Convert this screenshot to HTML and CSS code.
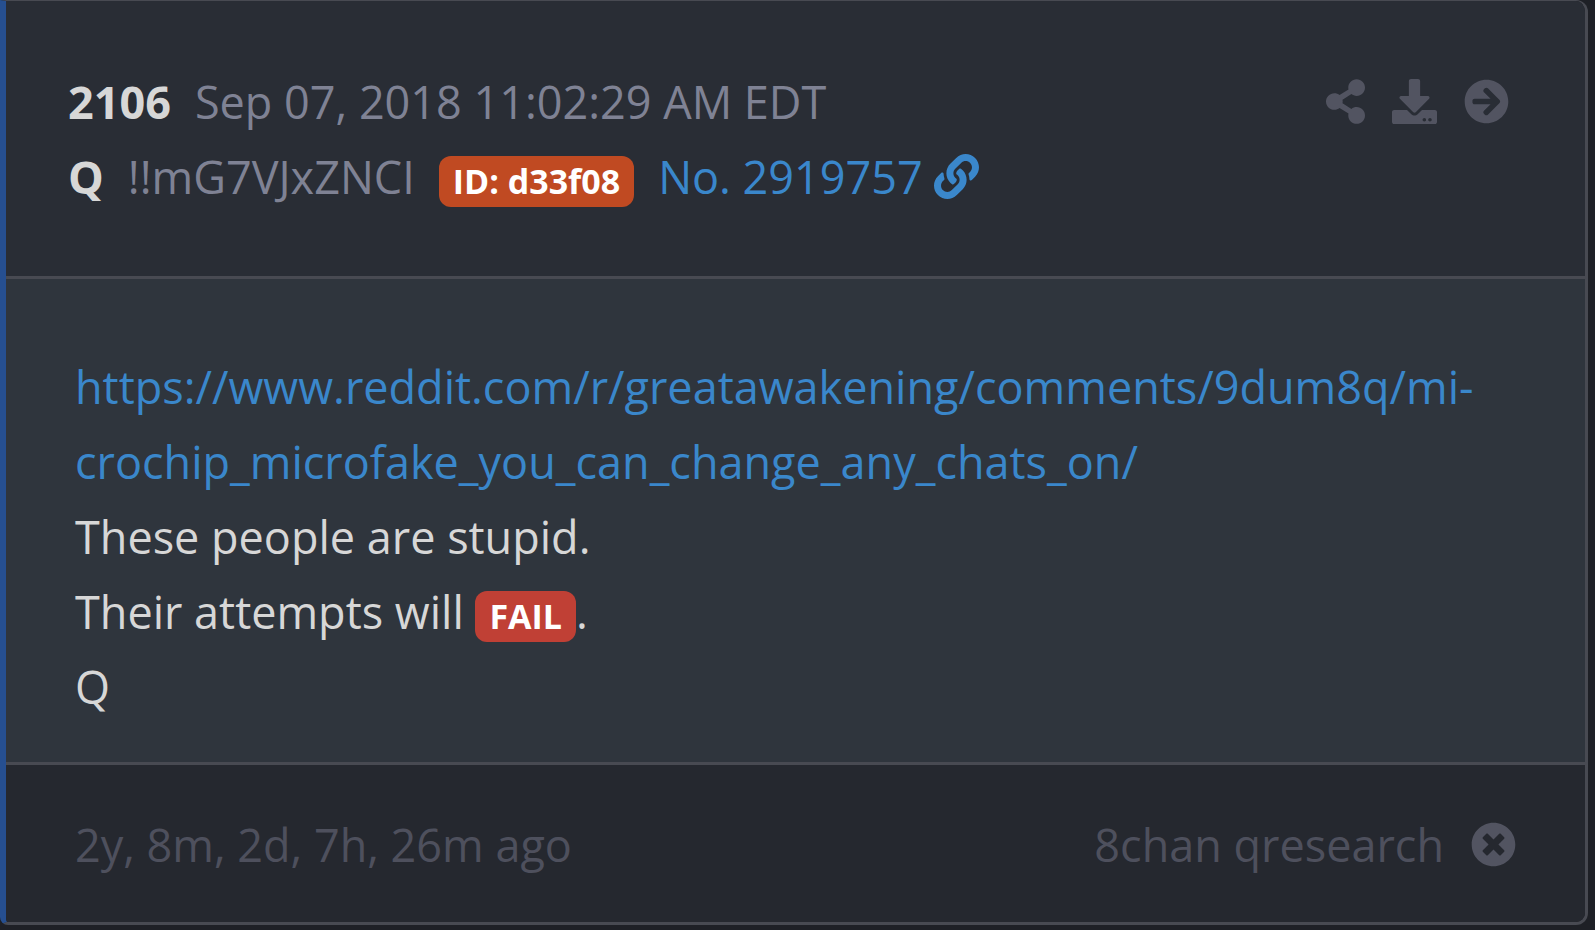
FILE: index.html
```html
<!DOCTYPE html>
<html lang="en">
  <head>
    <meta charset="UTF-8" />
    <meta name="viewport" content="width=device-width, initial-scale=1.0" />
    <title>2106</title>
    <link rel="stylesheet" href="styles.css">
  </head>
  <body>
    <article class="card">
      <header class="card-header">
        <div class="meta">
          <div class="meta-row">
            <strong class="strong">2106</strong>
            <time datetime="2018-09-07T11:02:29-04:00">Sep 07, 2018 11:02:29 AM EDT</time>
          </div>
          <div class="meta-row">
            <strong class="strong">Q</strong>
            <span>!!mG7VJxZNCI</span>
            <span class="badge badge-id">ID: d33f08</span>
            <a href="#2919757">No. 2919757 <svg class="icon" viewBox="0 0 512 512" aria-hidden="true"><path d="M326.612 185.391c59.747 59.809 58.927 155.698.36 214.59-.11.12-.24.25-.36.37l-67.2 67.2c-59.27 59.27-155.699 59.262-214.96 0-59.27-59.26-59.27-155.7 0-214.96l37.106-37.106c9.84-9.84 26.786-3.3 27.294 10.606.648 17.722 3.826 35.527 9.69 52.721 1.986 5.822.567 12.262-3.783 16.612l-13.087 13.087c-28.026 28.026-28.905 73.66-1.155 101.96 28.024 28.579 74.086 28.749 102.325.51l67.2-67.19c28.191-28.191 28.073-73.757 0-101.83-3.701-3.694-7.429-6.564-10.341-8.569a16.037 16.037 0 0 1-6.947-12.606c-.396-10.567 3.348-21.456 11.698-29.806l21.054-21.055c5.521-5.521 14.182-6.199 20.584-1.731a152.482 152.482 0 0 1 20.522 17.197zM467.547 44.449c-59.261-59.262-155.69-59.27-214.96 0l-67.2 67.2c-.12.12-.25.25-.36.37-58.566 58.892-59.387 154.781.36 214.59a152.454 152.454 0 0 0 20.521 17.196c6.402 4.468 15.064 3.789 20.584-1.731l21.054-21.055c8.35-8.35 12.094-19.239 11.698-29.806a16.037 16.037 0 0 0-6.947-12.606c-2.912-2.005-6.64-4.875-10.341-8.569-28.073-28.073-28.191-73.639 0-101.83l67.2-67.19c28.239-28.239 74.3-28.069 102.325.51 27.75 28.3 26.872 73.934-1.155 101.96l-13.087 13.087c-4.35 4.35-5.769 10.79-3.783 16.612 5.864 17.194 9.042 34.999 9.69 52.721.509 13.906 17.454 20.446 27.294 10.606l37.106-37.106c59.271-59.259 59.271-155.699.001-214.959z"/></svg></a>
          </div>
        </div>
        <div class="actions">
          <button type="button" class="icon-btn" aria-label="Share">
            <svg class="icon icon-share" viewBox="0 0 448 512"><path d="M352 320c-22.608 0-43.387 7.819-59.79 20.895l-102.486-64.054a96.551 96.551 0 0 0 0-41.683l102.486-64.054C308.613 184.181 329.392 192 352 192c53.019 0 96-42.981 96-96S405.019 0 352 0s-96 42.981-96 96c0 7.158.79 14.13 2.276 20.841L155.79 180.895C139.387 167.819 118.608 160 96 160c-53.019 0-96 42.981-96 96s42.981 96 96 96c22.608 0 43.387-7.819 59.79-20.895l102.486 64.054A96.301 96.301 0 0 0 256 416c0 53.019 42.981 96 96 96s96-42.981 96-96-42.981-96-96-96z"/></svg>
          </button>
          <button type="button" class="icon-btn" aria-label="Download">
            <svg class="icon" viewBox="0 0 512 512"><path d="M216 0h80c13.3 0 24 10.7 24 24v168h87.7c17.8 0 26.7 21.5 14.1 34.1L269.7 378.3c-7.5 7.5-19.8 7.5-27.3 0L90.1 226.1c-12.6-12.6-3.7-34.1 14.1-34.1H192V24c0-13.3 10.7-24 24-24zm296 376v112c0 13.3-10.7 24-24 24H24c-13.3 0-24-10.7-24-24V376c0-13.3 10.7-24 24-24h146.7l49 49c20.1 20.1 52.5 20.1 72.6 0l49-49H488c13.3 0 24 10.7 24 24zm-124 88c0-11-9-20-20-20s-20 9-20 20 9 20 20 20 20-9 20-20zm64 0c0-11-9-20-20-20s-20 9-20 20 9 20 20 20 20-9 20-20z"/></svg>
          </button>
          <button type="button" class="icon-btn" aria-label="Open">
            <svg class="icon" viewBox="0 0 512 512"><path d="M256 8c137 0 248 111 248 248S393 504 256 504 8 393 8 256 119 8 256 8zm-28.9 143.6l75.5 72.4H120c-13.3 0-24 10.7-24 24v16c0 13.3 10.7 24 24 24h182.6l-75.5 72.4c-9.7 9.3-9.9 24.8-.4 34.3l11 10.9c9.4 9.4 24.6 9.4 33.9 0L404.3 273c9.4-9.4 9.4-24.6 0-33.9L271.6 106.3c-9.4-9.4-24.6-9.4-33.9 0l-11 10.9c-9.5 9.6-9.3 25.1.4 34.4z"/></svg>
          </button>
        </div>
      </header>

      <div class="card-body">
        <p><a href="#reddit">https://www.reddit.com/r/greatawakening/comments/9dum8q/mi&shy;crochip_microfake_you_can_change_any_chats_on/</a></p>
        <p>These people are stupid.</p>
        <p>Their attempts will <span class="badge badge-fail">FAIL</span>.</p>
        <p>Q</p>
      </div>

      <footer class="card-footer">
        <span>2y, 8m, 2d, 7h, 26m ago</span>
        <div class="source">
          <span>8chan qresearch</span>
          <button type="button" class="icon-btn" aria-label="Close">
            <svg class="icon" viewBox="0 0 512 512"><path d="M256 8C119 8 8 119 8 256s111 248 248 248 248-111 248-248S393 8 256 8zm121.6 313.1c4.7 4.7 4.7 12.3 0 17L338 377.6c-4.7 4.7-12.3 4.7-17 0L256 312l-65.1 65.6c-4.7 4.7-12.3 4.7-17 0L134.4 338c-4.7-4.7-4.7-12.3 0-17l65.6-65-65.6-65.1c-4.7-4.7-4.7-12.3 0-17l39.6-39.6c4.7-4.7 12.3-4.7 17 0l65 65.7 65.1-65.6c4.7-4.7 12.3-4.7 17 0l39.6 39.6c4.7 4.7 4.7 12.3 0 17L312 256l65.6 65.1z"/></svg>
          </button>
        </div>
      </footer>
    </article>
  </body>
</html>
```

FILE: styles.css
```css
body {
  font-family: "Open Sans", "Noto Sans", sans-serif;
  font-size: 45px;
  line-height: 75px;
  color: #d7d7d7;
  background-color: #1e2026;
  margin: 0;
}

a {
  color: #3a87cb;
  text-decoration: none;
}

p {
  margin: 0;
}

.card {
  margin-right: 7px;
  border: 3px solid #484a52;
  border-top-width: 1px;
  border-left: 6px solid #264f90;
  border-radius: 0 12px 12px 8px;
  overflow: hidden;
}

.card-header {
  display: flex;
  justify-content: space-between;
  padding: 63px 76px 62px 62px;
  background-color: #292d35;
  border-bottom: 3px solid #484a52;
  color: #7f8294;
}

.meta-row {
  display: flex;
  align-items: baseline;
  gap: 24px;
}

.strong {
  color: #d7d7d7;
  font-weight: bold;
}

.badge {
  display: inline-block;
  padding: 8px 14px 9px;
  border-radius: 12px;
  color: #fff;
  font-size: 34px;
  font-weight: bold;
  line-height: 34px;
  vertical-align: middle;
}

.badge-id {
  background-color: #c04a22;
}

.badge-fail {
  background-color: #c04035;
}

.icon {
  width: 45px;
  height: 45px;
  fill: currentColor;
  vertical-align: -5px;
}

.icon-share {
  width: 39px;
}

.icon-btn {
  padding: 0;
  border: none;
  background: none;
  color: #525461;
  font: inherit;
  cursor: pointer;
}

.actions {
  display: flex;
  align-items: flex-start;
  gap: 27px;
}

.card-body {
  padding: 70px 68px 38px 69px;
  background-color: #2f353d;
  border-bottom: 3px solid #484a52;
}

.card-footer {
  display: flex;
  justify-content: space-between;
  padding: 42px 69px 40px;
  background-color: #25282f;
  color: #4e505d;
}

.source {
  display: flex;
  align-items: baseline;
  gap: 27px;
}
```
